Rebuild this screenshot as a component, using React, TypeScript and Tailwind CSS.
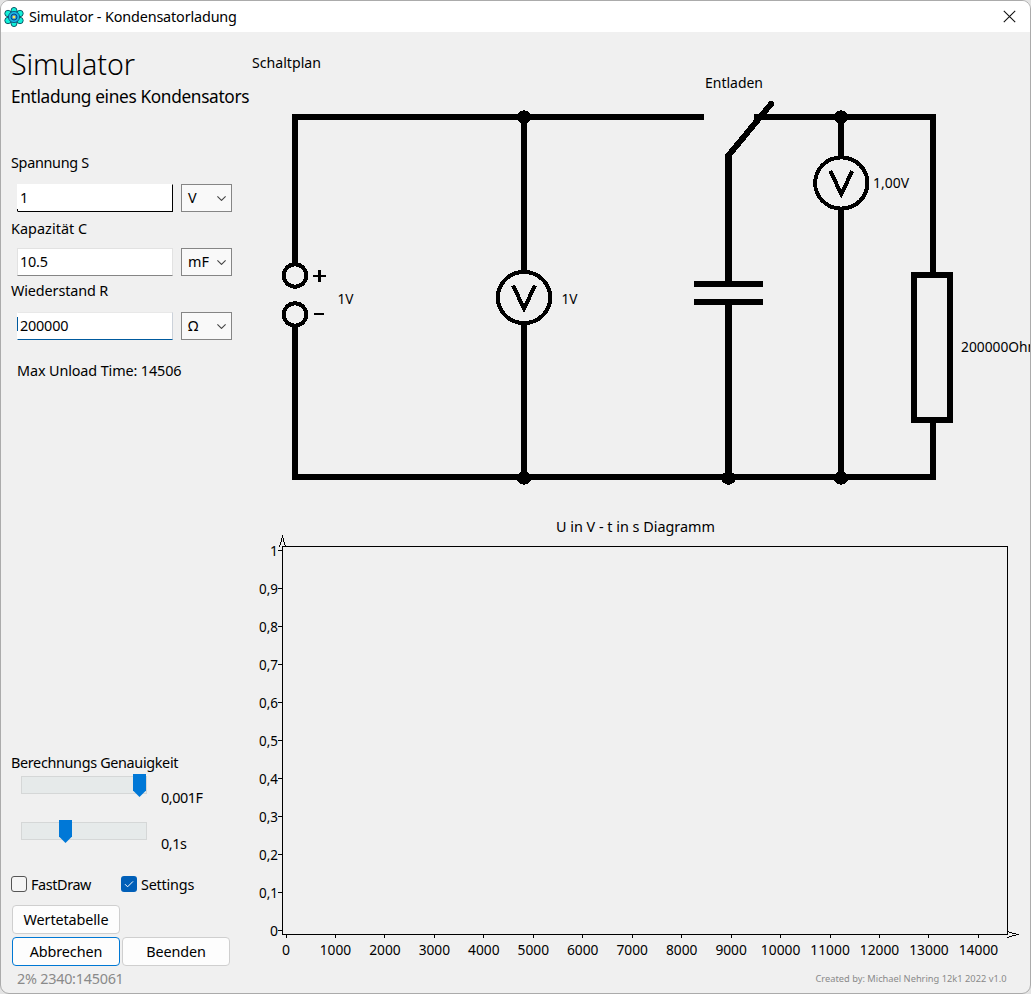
import React from "react";

type LabelProps = { x: number; y: number; w?: number; mid?: boolean; end?: boolean; size?: number; fill?: string; children: string };

function Label({ x, y, w, mid, end, size = 14.4, fill = "#000", children }: LabelProps) {
  return (
    <text
      x={x}
      y={y}
      fontSize={size}
      fill={fill}
      textLength={w}
      lengthAdjust="spacingAndGlyphs"
      textAnchor={mid ? "middle" : end ? "end" : "start"}
    >
      {children}
    </text>
  );
}

function AtomIcon() {
  return (
    <svg width="20" height="20" viewBox="0 0 20 20">
      <g fill="#12f0d8" stroke="#0a4a5c" strokeWidth="0.9">
        <ellipse cx="10" cy="3.8" rx="3" ry="3.4" />
        <ellipse cx="10" cy="16.2" rx="3" ry="3.4" />
        <circle cx="4" cy="6.5" r="3.2" />
        <circle cx="16" cy="6.5" r="3.2" />
        <circle cx="4" cy="13.5" r="3.2" />
        <circle cx="16" cy="13.5" r="3.2" />
      </g>
      <circle cx="10" cy="10" r="5.6" fill="#17b4e4" stroke="#0b5480" strokeWidth="0.9" />
      <circle cx="10" cy="10" r="3" fill="#1b8fe0" stroke="#0a3f78" strokeWidth="0.9" />
      <circle cx="10" cy="10" r="1.5" fill="#ffe14d" />
    </svg>
  );
}

function TitleBar() {
  return (
    <header className="flex h-[31px] shrink-0 items-center bg-white pl-[3px] pr-[14px]">
      <AtomIcon />
      <span className="ml-[5px] text-[14.4px] tracking-[-0.15px]">Simulator - Kondensatorladung</span>
      <svg className="ml-auto" width="13" height="13" viewBox="0 0 13 13" stroke="#111" strokeWidth="1.1">
        <path d="M0.8 0.8 12.2 12.2M12.2 0.8 0.8 12.2" />
      </svg>
    </header>
  );
}

function Field({ value, unit, look, children }: { value: string; unit: string; look: string; children?: React.ReactNode }) {
  return (
    <div className="ml-[16px] flex h-[28px] gap-[8px]">
      <div className={"relative flex w-[156px] items-center border bg-white pl-[2px] text-[14.4px] tracking-[-0.2px] " + look}>
        {value}
        {children}
      </div>
      <div className="flex w-[51px] items-center justify-between border border-[#858585] bg-[#f9f9f9] pl-[6px] pr-[5px] text-[14.4px]">
        <span>{unit}</span>
        <svg width="9" height="5" viewBox="0 0 9 5" fill="none" stroke="#444" strokeWidth="1.1">
          <path d="M0.4 0.4 4.5 4.4 8.6 0.4" />
        </svg>
      </div>
    </div>
  );
}

function Slider({ text, offset }: { text: string; offset: string }) {
  return (
    <div className="ml-[20px] flex h-[36px] gap-[14px]">
      <div className="mt-[2px] h-[18px] w-[126px] border border-[#d5d7d7] bg-[#e6eaea]">
        <svg className={"relative -top-[3px] " + offset} width="13" height="23" viewBox="0 0 13 23">
          <path d="M0 0H13V16.5L6.5 23L0 16.5Z" fill="#0078d7" />
        </svg>
      </div>
      <span className="self-start pt-[14px] leading-5 tracking-[-0.45px]">{text}</span>
    </div>
  );
}

function Sidebar() {
  return (
    <aside className="flex w-[249px] shrink-0 flex-col whitespace-nowrap text-[14.4px] leading-5">
      <h1 className="ml-[10px] mt-[14px] h-[36px] text-[28.6px] font-light leading-[36px] tracking-[-0.1px]">Simulator</h1>
      <h2 className="ml-[10px] mt-[4px] h-[22px] text-[17.3px] leading-[22px] tracking-[-0.36px]">Entladung eines Kondensators</h2>
      <div className="ml-[10px] mt-[45px] mb-[11px] tracking-[-0.3px]">Spannung S</div>
      <Field value="1" unit="V" look="border-t-white border-l-white border-r-black border-b-black">
        <span className="absolute -left-px bottom-0 h-[2px] w-px bg-black" />
      </Field>
      <div className="ml-[10px] mt-[7px] mb-[9px] tracking-[0.05px]">Kapazität C</div>
      <Field value="10.5" unit="mF" look="border-[#e2e2e2] border-b-[#858585]" />
      <div className="ml-[10px] mt-[5px] mb-[11px] tracking-[-0.12px]">Wiederstand R</div>
      <Field value="200000" unit="Ω" look="border-t-[#e8e8e8] border-l-white border-r-[#ccd2da] border-b-[#005a9e]">
        <span className="absolute -left-px top-[4px] h-[14px] w-px bg-[#005a9e]" />
      </Field>
      <div className="ml-[16px] mt-[21px] tracking-[-0.12px]">Max Unload Time: 14506</div>

      <div className="ml-[10px] mt-[372px] mb-[1px] tracking-[-0.34px]">Berechnungs Genauigkeit</div>
      <Slider text="0,001F" offset="left-[111px]" />
      <div className="h-[10px]" />
      <Slider text="0,1s" offset="left-[37px]" />

      <div className="ml-[10px] mt-[18px] flex h-[20px] items-center">
        <span className="flex h-[16px] w-[16px] rounded-[3px] border border-[#555] bg-[#f5f5f5]" />
        <span className="ml-[4px] w-[90px] pt-px tracking-[-0.4px]">FastDraw</span>
        <span className="flex h-[16px] w-[16px] items-center justify-center rounded-[3px] bg-[#005fb8]">
          <svg width="10" height="8" viewBox="0 0 10 8" fill="none" stroke="#fff" strokeWidth="1">
            <path d="M1 4.2 3.6 6.8 9 1.4" />
          </svg>
        </span>
        <span className="ml-[4px] pt-px tracking-[-0.2px]">Settings</span>
      </div>

      <div className="ml-[11px] mt-[11px] grid grid-cols-[108px_108px] gap-x-[2px] gap-y-[3px] tracking-[-0.12px]">
        <button className="h-[29px] rounded-[4px] border border-[#cfcfcf] bg-[#fdfdfd]">Wertetabelle</button>
        <span />
        <button className="h-[29px] rounded-[4px] border border-[#0078d4] bg-[#fdfdfd]">Abbrechen</button>
        <button className="h-[29px] rounded-[4px] border border-[#cfcfcf] bg-[#fdfdfd]">Beenden</button>
      </div>
      <div className="ml-[16px] mt-[3px] tracking-[-0.25px] text-[#8a8a8a]">2% 2340:145061</div>
    </aside>
  );
}

function Voltmeter({ x, y }: { x: number; y: number }) {
  return (
    <g fill="none" stroke="#000" strokeWidth="4">
      <ellipse cx={x} cy={y} rx="26.2" ry="25.6" fill="#f0f0f0" />
      <path d={`M${x - 11} ${y - 12}L${x} ${y + 11}L${x + 11} ${y - 12}`} strokeWidth="4" />
    </g>
  );
}

function Circuit() {
  const dots = [[524, 117], [841, 117], [524, 478], [728.5, 478], [841, 478]];
  return (
    <svg className="shrink-0" width="780" height="475" viewBox="250 32 780 475" shapeRendering="crispEdges">
      <g fill="none" stroke="#000" strokeWidth="6">
        <path d="M704 117H295V265M295 325V477H933V420" />
        <path d="M524 117V477M841 117V477M754 117H933V275" />
        <path d="M728.5 155V284M728.5 302V477" strokeWidth="7" />
        <path d="M694 284H763M694 302H763" />
        <path d="M728 156L771 104" strokeWidth="6" strokeLinecap="round" />
        <path d="M914 275H950V420H914Z" />
        <circle cx="295" cy="275.5" r="11.2" strokeWidth="4" />
        <circle cx="295" cy="314.5" r="11.2" strokeWidth="4" />
        <path d="M313 276H326" strokeWidth="2" />
        <path d="M319.5 270V282" strokeWidth="3" />
        <path d="M314 314H324" strokeWidth="2" />
      </g>
      {dots.map(([x, y]) => (
        <ellipse key={`${x}-${y}`} cx={x} cy={y} rx="7.3" ry="6.7" />
      ))}
      <Voltmeter x={524} y={297.5} />
      <Voltmeter x={841.3} y={183} />
      <Label x={252} y={68} w={69}>Schaltplan</Label>
      <Label x={705} y={88} w={58}>Entladen</Label>
      <Label x={337.5} y={304} w={16}>1V</Label>
      <Label x={561.5} y={304} w={16}>1V</Label>
      <Label x={873} y={188} w={36}>1,00V</Label>
      <Label x={961} y={352} w={79.5}>200000Ohm</Label>
    </svg>
  );
}

function Diagram() {
  const yTicks = ["1", "0,9", "0,8", "0,7", "0,6", "0,5", "0,4", "0,3", "0,2", "0,1", "0"];
  const xTicks = Array.from({ length: 15 }, (_, i) => i);
  return (
    <svg className="shrink-0" width="780" height="486" viewBox="250 507 780 486">
      <Label x={556} y={532} w={159}>U in V - t in s Diagramm</Label>
      <g fill="none" stroke="#000" shapeRendering="crispEdges">
        <path d="M282.5 546.5H1007.5V934.5H282.5Z" />
        <path d="M279.5 547L282.5 536.5L285.5 547M1007 931.5L1017.5 934.5L1007 937.5" />
        {yTicks.map((t, i) => (
          <path key={t} d={`M278 ${550.5 + i * 38}H282`} />
        ))}
        {xTicks.map((i) => (
          <path key={i} d={`M${Math.floor(286 + i * 49.46) + 0.5} 935V938`} />
        ))}
      </g>
      {yTicks.map((t, i) => (
        <Label key={t} x={278} y={555.5 + i * 38} w={t.length > 1 ? 19 : 8} end>{t}</Label>
      ))}
      {xTicks.map((i) => (
        <Label key={i} x={286 + i * 49.46} y={955} w={i === 0 ? 8 : i < 10 ? 31.5 : 39.5} mid>{String(i * 1000)}</Label>
      ))}
      <Label x={815.5} y={982} w={191} size={9.6} fill="#8a8a8a">Created by: Michael Nehring 12k1 2022 v1.0</Label>
    </svg>
  );
}

export default function App() {
  return (
    <div className="h-[994px] w-[1031px] bg-[#e4e4e4] font-['Noto_Sans',sans-serif] text-black">
      <div className="flex h-full w-full flex-col overflow-hidden rounded-[9px] border border-[#ababab] bg-[#f0f0f0]">
        <TitleBar />
        <div className="flex min-h-0 flex-1">
          <Sidebar />
          <main className="flex w-[780px] shrink-0 flex-col">
            <Circuit />
            <Diagram />
          </main>
        </div>
      </div>
    </div>
  );
}
